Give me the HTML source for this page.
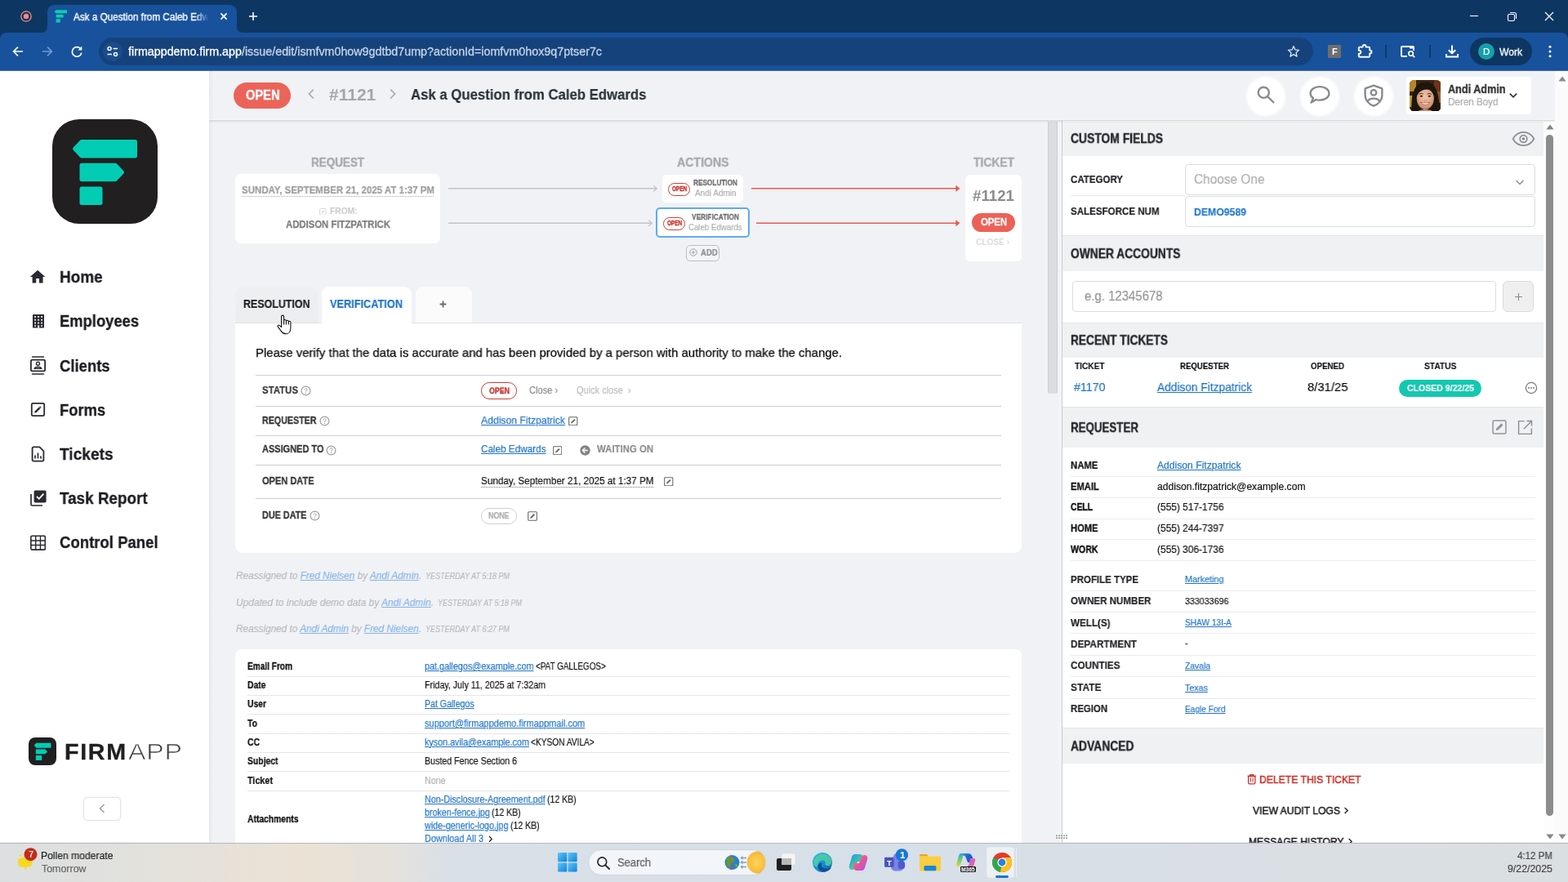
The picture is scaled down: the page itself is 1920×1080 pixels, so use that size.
<!DOCTYPE html>
<html lang="en"><head><meta charset="utf-8"><title>Ask a Question from Caleb Edwards</title>
<style>
html,body{margin:0;padding:0}
body{width:1920px;height:1080px;overflow:hidden;position:relative;background:#f0f2f6;font-family:"Liberation Sans",sans-serif;}
.a{position:absolute;display:block}
.t{position:absolute;display:block;white-space:nowrap;transform-origin:0 50%;will-change:transform;}
.t a, a{color:inherit}
u{text-decoration:underline;text-decoration-thickness:1px;text-underline-offset:1px}

</style></head><body>

<!-- main column -->
<div class="a" style="left:256px;top:87px;width:5px;height:945px;background:linear-gradient(90deg,#e6e7eb,#f0f2f6);"></div>
<span class="t" style="left:381.00px;top:191px;font-size:16px;line-height:16px;color:#a7a8aa;font-weight:700;transform:scale(0.8404,0.9167);transform-origin:0 13px;-webkit-text-stroke:0.40px;">REQUEST</span>
<div class="a" style="left:288px;top:213px;width:251px;height:85px;background:#fff;border-radius:7px;"></div>
<span class="t" style="left:295.50px;top:226px;font-size:13px;line-height:13px;color:#9c9d9f;font-weight:700;transform:scaleX(0.8844);-webkit-text-stroke:0.22px;">SUNDAY, SEPTEMBER 21, 2025 AT 1:37 PM</span>
<div class="a" style="left:296px;top:240px;width:235px;height:1px;border-top:1px dotted #a8a8a8;"></div>
<svg class="a" style="left:391.3px;top:254.8px" width="8.5" height="8.5" viewBox="0 0 12 12"><rect x="0.7" y="0.7" width="10.6" height="10.6" rx="1" fill="none" stroke="#d4d4d4" stroke-width="1.2"/><path d="M3.2 8.8 L3.6 7 L7.6 3 L9 4.4 L5 8.4 Z" fill="#d4d4d4"/></svg>
<span class="t" style="left:403.50px;top:253px;font-size:11px;line-height:11px;color:#cbcbcb;font-weight:700;transform:scaleX(0.9293);-webkit-text-stroke:0.11px;">FROM:</span>
<span class="t" style="left:349.50px;top:268px;font-size:13px;line-height:13px;color:#7b7b7d;font-weight:700;transform:scaleX(0.8717);-webkit-text-stroke:0.25px;">ADDISON FITZPATRICK</span>
<svg class="a" style="left:545px;top:224px" width="265" height="56" viewBox="0 0 265 56">
<path d="M4 6.8 H258.6" stroke="#c2c4c8" stroke-width="1.5"/><path d="M255.3 3.3 L259.2 6.8 L255.3 10.3" fill="none" stroke="#c2c4c8" stroke-width="1.3"/>
<path d="M4 49.2 H252.6" stroke="#c2c4c8" stroke-width="1.5"/><path d="M249.3 45.7 L253.2 49.2 L249.3 52.7" fill="none" stroke="#c2c4c8" stroke-width="1.3"/></svg>
<span class="t" style="left:829.00px;top:191px;font-size:16px;line-height:16px;color:#a7a8aa;font-weight:700;transform:scale(0.8819,0.9167);transform-origin:0 13px;-webkit-text-stroke:0.28px;">ACTIONS</span>
<div class="a" style="left:810.5px;top:214px;width:99.5px;height:33.5px;background:#fff;border-radius:5px;"></div>
<div class="a" style="left:818px;top:224px;width:27px;height:15.6px;background:#fff;border-radius:7.8px;border:1.5px solid #d0403a;box-sizing:border-box;"></div>
<span class="t" style="left:822.50px;top:227px;font-size:8.5px;line-height:8.5px;color:#c9302c;font-weight:700;transform:scaleX(0.7471);-webkit-text-stroke:0.37px;">OPEN</span>
<span class="t" style="left:849.00px;top:219px;font-size:10px;line-height:10px;color:#6d6d6f;font-weight:700;transform:scale(0.8236,0.8750);transform-origin:0 8px;-webkit-text-stroke:0.28px;">RESOLUTION</span>
<span class="t" style="left:851.00px;top:231px;font-size:11px;line-height:11px;color:#adadaf;transform:scaleX(0.9074);-webkit-text-stroke:0.18px;">Andi Admin</span>
<div class="a" style="left:803px;top:254.3px;width:115px;height:36.3px;background:#fff;border-radius:5px;border:2px solid #5eabf2;box-sizing:border-box;"></div>
<div class="a" style="left:812px;top:266px;width:27px;height:15.6px;background:#fff;border-radius:7.8px;border:1.5px solid #d0403a;box-sizing:border-box;"></div>
<span class="t" style="left:816.50px;top:269px;font-size:8.5px;line-height:8.5px;color:#c9302c;font-weight:700;transform:scaleX(0.7471);-webkit-text-stroke:0.37px;">OPEN</span>
<span class="t" style="left:847.00px;top:261px;font-size:10px;line-height:10px;color:#6d6d6f;font-weight:700;transform:scale(0.8306,0.8750);transform-origin:0 8px;-webkit-text-stroke:0.27px;">VERIFICATION</span>
<span class="t" style="left:843.00px;top:273px;font-size:11px;line-height:11px;color:#adadaf;transform:scaleX(0.8781);-webkit-text-stroke:0.18px;">Caleb Edwards</span>
<div class="a" style="left:840px;top:300px;width:41px;height:20px;background:#f3f4f6;border-radius:5px;border:1px solid #bdbdbf;box-sizing:border-box;"></div>
<svg class="a" style="left:843.5px;top:304.2px" width="10" height="10" viewBox="0 0 10 10"><circle cx="5" cy="5" r="4.2" fill="none" stroke="#9a9a9c" stroke-width="0.9"/><path d="M5 2.8 V7.2 M2.8 5 H7.2" stroke="#9a9a9c" stroke-width="0.9"/></svg>
<span class="t" style="left:858.00px;top:304px;font-size:11px;line-height:11px;color:#8f8f91;font-weight:700;transform:scaleX(0.8598);-webkit-text-stroke:0.23px;">ADD</span>
<svg class="a" style="left:916px;top:224px" width="264" height="56" viewBox="0 0 264 56">
<path d="M4 6.8 H258.4" stroke="#ea5a4c" stroke-width="1.6"/><path d="M254.6 3.3 L259 6.8 L254.6 10.3 Z" fill="#ea5a4c" stroke="#ea5a4c" stroke-width="0.6"/>
<path d="M10 49.2 H258.4" stroke="#ea5a4c" stroke-width="1.6"/><path d="M254.6 45.7 L259 49.2 L254.6 52.7 Z" fill="#ea5a4c" stroke="#ea5a4c" stroke-width="0.6"/></svg>
<span class="t" style="left:1192.00px;top:191px;font-size:16px;line-height:16px;color:#a7a8aa;font-weight:700;transform:scale(0.8653,0.9167);transform-origin:0 13px;-webkit-text-stroke:0.32px;">TICKET</span>
<div class="a" style="left:1181.5px;top:213.5px;width:69.5px;height:106.5px;background:#fff;border-radius:6px;"></div>
<span class="t" style="left:1190.50px;top:231px;font-size:18.5px;line-height:18.5px;color:#8b8c8e;font-weight:700;transform:scaleX(1.0112);">#1121</span>
<div class="a" style="left:1190px;top:261px;width:53px;height:23px;background:#ec6157;border-radius:11.5px;"></div>
<span class="t" style="left:1200.50px;top:265px;font-size:13px;line-height:13px;color:#fff;font-weight:700;transform:scaleX(0.8685);-webkit-text-stroke:0.26px;">OPEN</span>
<span class="t" style="left:1194.50px;top:291px;font-size:11px;line-height:11px;color:#dcdcdd;font-weight:700;transform:scaleX(0.9188);-webkit-text-stroke:0.13px;">CLOSE &rsaquo;</span>
<div class="a" style="left:288px;top:352px;width:101px;height:44px;background:linear-gradient(180deg,#eeeff1,#ecedef);border-radius:7px 7px 0 0;"></div>
<div class="a" style="left:394px;top:351px;width:109.5px;height:46px;background:#fff;border-radius:9px 9px 0 0;"></div>
<div class="a" style="left:508.5px;top:351px;width:69.5px;height:44.5px;background:#fbfbfc;border-radius:9px 9px 0 0;"></div>
<span class="t" style="left:298.00px;top:365px;font-size:14px;line-height:14px;color:#202124;font-weight:700;transform:scaleX(0.8880);-webkit-text-stroke:0.23px;">RESOLUTION</span>
<span class="t" style="left:404.00px;top:365px;font-size:14px;line-height:14px;color:#1b74c9;font-weight:700;transform:scaleX(0.9105);-webkit-text-stroke:0.18px;">VERIFICATION</span>
<svg class="a" style="left:538px;top:367.5px" width="9" height="9" viewBox="0 0 9 9"><path d="M4.5 0.6 V8.4 M0.6 4.5 H8.4" stroke="#6a6a6d" stroke-width="1.8"/></svg>
<div class="a" style="left:288px;top:395.5px;width:963px;height:281.5px;background:#fff;border-radius:0 0 9px 9px;"></div>
<div class="a" style="left:288px;top:395px;width:106px;height:1px;background:#e0e1e4;"></div>
<div class="a" style="left:503.5px;top:395px;width:747.5px;height:1px;background:#e0e1e4;"></div>
<span class="t" style="left:313.00px;top:424px;font-size:15px;line-height:15px;color:#0c0c0c;transform:scaleX(0.9943);-webkit-text-stroke:0.25px;">Please verify that the data is accurate and has been provided by a person with authority to make the change.</span>
<div class="a" style="left:313px;top:459px;width:913px;height:1px;background:#cfcfcf;"></div>
<div class="a" style="left:313px;top:497px;width:913px;height:1px;background:#cfcfcf;"></div>
<div class="a" style="left:313px;top:533px;width:913px;height:1px;background:#cfcfcf;"></div>
<div class="a" style="left:313px;top:569px;width:913px;height:1px;background:#cfcfcf;"></div>
<div class="a" style="left:313px;top:610px;width:913px;height:1px;background:#cfcfcf;"></div>
<span class="t" style="left:321.00px;top:471px;font-size:13px;line-height:13px;color:#353537;font-weight:700;transform:scaleX(0.8786);-webkit-text-stroke:0.23px;">STATUS</span>
<svg class="a" style="left:367.5px;top:472.2px" width="13" height="13" viewBox="0 0 13 13"><circle cx="6.5" cy="6.5" r="5.4" fill="none" stroke="#9d9d9f" stroke-width="1.2"/><path d="M4.9 5.3 C4.9 3.3 8.1 3.3 8.1 5.2 C8.1 6.4 6.5 6.5 6.5 7.8" fill="none" stroke="#9d9d9f" stroke-width="1"/><circle cx="6.5" cy="9.5" r="0.7" fill="#9d9d9f"/></svg>
<div class="a" style="left:589px;top:468.4px;width:44px;height:20.4px;background:#fff;border-radius:10.2px;border:1.5px solid #cb3a33;box-sizing:border-box;"></div>
<span class="t" style="left:598.50px;top:473px;font-size:11px;line-height:11px;color:#c9302c;font-weight:700;transform:scale(0.8016,0.9375);transform-origin:0 9px;-webkit-text-stroke:0.35px;">OPEN</span>
<span class="t" style="left:648.00px;top:472px;font-size:12.5px;line-height:12.5px;color:#8a8a8c;transform:scaleX(0.8840);-webkit-text-stroke:0.18px;">Close &rsaquo;</span>
<span class="t" style="left:705.50px;top:472px;font-size:12.5px;line-height:12.5px;color:#bcbcbe;transform:scaleX(0.8783);-webkit-text-stroke:0.18px;">Quick close &nbsp;&rsaquo;</span>
<span class="t" style="left:321.00px;top:508px;font-size:13px;line-height:13px;color:#353537;font-weight:700;transform:scaleX(0.8219);-webkit-text-stroke:0.37px;">REQUESTER</span>
<svg class="a" style="left:390.5px;top:508.70000000000005px" width="13" height="13" viewBox="0 0 13 13"><circle cx="6.5" cy="6.5" r="5.4" fill="none" stroke="#9d9d9f" stroke-width="1.2"/><path d="M4.9 5.3 C4.9 3.3 8.1 3.3 8.1 5.2 C8.1 6.4 6.5 6.5 6.5 7.8" fill="none" stroke="#9d9d9f" stroke-width="1"/><circle cx="6.5" cy="9.5" r="0.7" fill="#9d9d9f"/></svg>
<span class="t" style="left:588.50px;top:508px;font-size:13px;line-height:13px;color:#2074c7;transform:scaleX(0.9378);-webkit-text-stroke:0.18px;"><u>Addison Fitzpatrick</u></span>
<svg class="a" style="left:696px;top:509.6px" width="11.5" height="11.5" viewBox="0 0 12 12"><rect x="0.7" y="0.7" width="10.6" height="10.6" rx="1" fill="none" stroke="#666" stroke-width="1.1"/><path d="M3.2 8.8 L3.6 7 L7.6 3 L9 4.4 L5 8.4 Z" fill="#666"/></svg>
<span class="t" style="left:321.00px;top:543px;font-size:13px;line-height:13px;color:#353537;font-weight:700;transform:scaleX(0.8451);-webkit-text-stroke:0.31px;">ASSIGNED TO</span>
<svg class="a" style="left:399.3px;top:544.5px" width="13" height="13" viewBox="0 0 13 13"><circle cx="6.5" cy="6.5" r="5.4" fill="none" stroke="#9d9d9f" stroke-width="1.2"/><path d="M4.9 5.3 C4.9 3.3 8.1 3.3 8.1 5.2 C8.1 6.4 6.5 6.5 6.5 7.8" fill="none" stroke="#9d9d9f" stroke-width="1"/><circle cx="6.5" cy="9.5" r="0.7" fill="#9d9d9f"/></svg>
<span class="t" style="left:588.50px;top:543px;font-size:13px;line-height:13px;color:#2074c7;transform:scaleX(0.9018);-webkit-text-stroke:0.18px;"><u>Caleb Edwards</u></span>
<svg class="a" style="left:676.5px;top:545.5px" width="11.5" height="11.5" viewBox="0 0 12 12"><rect x="0.7" y="0.7" width="10.6" height="10.6" rx="1" fill="none" stroke="#666" stroke-width="1.1"/><path d="M3.2 8.8 L3.6 7 L7.6 3 L9 4.4 L5 8.4 Z" fill="#666"/></svg>
<svg class="a" style="left:709.7px;top:544.6px" width="13" height="13" viewBox="0 0 13 13"><circle cx="6.5" cy="6.5" r="6.2" fill="#858587"/><path d="M9.8 6.5 H3.6 M6.3 3.6 L3.4 6.5 L6.3 9.4" fill="none" stroke="#fff" stroke-width="1.4"/></svg>
<span class="t" style="left:730.50px;top:544px;font-size:12.5px;line-height:12.5px;color:#8b8b8d;font-weight:700;transform:scaleX(0.9115);-webkit-text-stroke:0.16px;">WAITING ON</span>
<span class="t" style="left:321.00px;top:582px;font-size:13px;line-height:13px;color:#353537;font-weight:700;transform:scaleX(0.8479);-webkit-text-stroke:0.30px;">OPEN DATE</span>
<span class="t" style="left:588.50px;top:582px;font-size:13px;line-height:13px;color:#111;transform:scaleX(0.9014);-webkit-text-stroke:0.18px;">Sunday, September 21, 2025 at 1:37 PM</span>
<div class="a" style="left:589px;top:596px;width:211px;height:1px;border-top:1px dotted #777;"></div>
<svg class="a" style="left:813px;top:583.8px" width="11.5" height="11.5" viewBox="0 0 12 12"><rect x="0.7" y="0.7" width="10.6" height="10.6" rx="1" fill="none" stroke="#666" stroke-width="1.1"/><path d="M3.2 8.8 L3.6 7 L7.6 3 L9 4.4 L5 8.4 Z" fill="#666"/></svg>
<span class="t" style="left:321.00px;top:624px;font-size:13px;line-height:13px;color:#353537;font-weight:700;transform:scaleX(0.8323);-webkit-text-stroke:0.34px;">DUE DATE</span>
<svg class="a" style="left:378.5px;top:625.1px" width="13" height="13" viewBox="0 0 13 13"><circle cx="6.5" cy="6.5" r="5.4" fill="none" stroke="#9d9d9f" stroke-width="1.2"/><path d="M4.9 5.3 C4.9 3.3 8.1 3.3 8.1 5.2 C8.1 6.4 6.5 6.5 6.5 7.8" fill="none" stroke="#9d9d9f" stroke-width="1"/><circle cx="6.5" cy="9.5" r="0.7" fill="#9d9d9f"/></svg>
<div class="a" style="left:589px;top:622.3px;width:44px;height:19.5px;background:#fff;border-radius:9.75px;border:1px solid #d0d0d2;box-sizing:border-box;"></div>
<span class="t" style="left:598.25px;top:627px;font-size:10px;line-height:10px;color:#a9a9ab;font-weight:700;transform:scaleX(0.8822);-webkit-text-stroke:0.17px;">NONE</span>
<svg class="a" style="left:646.2px;top:625.6px" width="12" height="12" viewBox="0 0 12 12"><rect x="0.7" y="0.7" width="10.6" height="10.6" rx="1" fill="none" stroke="#666" stroke-width="1.1"/><path d="M3.2 8.8 L3.6 7 L7.6 3 L9 4.4 L5 8.4 Z" fill="#666"/></svg>
<span class="t" style="left:288.50px;top:699px;font-size:12.5px;line-height:12.5px;color:#b7b9be;font-style:italic;transform:scaleX(0.9423);-webkit-text-stroke:0.18px;">Reassigned to <u style="color:#86b4e6">Fred Nielsen</u> by <u style="color:#86b4e6">Andi Admin</u>.</span>
<span class="t" style="left:521.40px;top:700px;font-size:10.5px;line-height:10.5px;color:#b7b9be;font-style:italic;transform:scaleX(0.8596);-webkit-text-stroke:0.18px;">YESTERDAY AT 5:18 PM</span>
<span class="t" style="left:288.50px;top:732px;font-size:12.5px;line-height:12.5px;color:#b7b9be;font-style:italic;transform:scaleX(0.9549);-webkit-text-stroke:0.18px;">Updated to include demo data by <u style="color:#86b4e6">Andi Admin</u>.</span>
<span class="t" style="left:536.30px;top:733px;font-size:10.5px;line-height:10.5px;color:#b7b9be;font-style:italic;transform:scaleX(0.8596);-webkit-text-stroke:0.18px;">YESTERDAY AT 5:18 PM</span>
<span class="t" style="left:288.50px;top:764px;font-size:12.5px;line-height:12.5px;color:#b7b9be;font-style:italic;transform:scaleX(0.9422);-webkit-text-stroke:0.18px;">Reassigned to <u style="color:#86b4e6">Andi Admin</u> by <u style="color:#86b4e6">Fred Nielsen</u>.</span>
<span class="t" style="left:521.40px;top:765px;font-size:10.5px;line-height:10.5px;color:#b7b9be;font-style:italic;transform:scaleX(0.8596);-webkit-text-stroke:0.18px;">YESTERDAY AT 6:27 PM</span>
<div class="a" style="left:288px;top:795px;width:963px;height:240px;background:#fff;border-radius:8px 8px 0 0;"></div>
<div class="a" style="left:303px;top:828px;width:933px;height:1px;background:#e6e6e8;"></div>
<div class="a" style="left:303px;top:851px;width:933px;height:1px;background:#e6e6e8;"></div>
<div class="a" style="left:303px;top:874px;width:933px;height:1px;background:#e6e6e8;"></div>
<div class="a" style="left:303px;top:898px;width:933px;height:1px;background:#e6e6e8;"></div>
<div class="a" style="left:303px;top:921px;width:933px;height:1px;background:#e6e6e8;"></div>
<div class="a" style="left:303px;top:944px;width:933px;height:1px;background:#e6e6e8;"></div>
<div class="a" style="left:303px;top:968px;width:933px;height:1px;background:#e6e6e8;"></div>
<span class="t" style="left:303.00px;top:810px;font-size:12px;line-height:12px;color:#111;font-weight:700;transform:scaleX(0.8415);-webkit-text-stroke:0.29px;">Email From</span>
<span class="t" style="left:519.50px;top:810px;font-size:12px;line-height:12px;color:#2074c7;transform:scaleX(0.9011);-webkit-text-stroke:0.18px;"><u>pat.gallegos@example.com</u></span>
<span class="t" style="left:655.80px;top:810px;font-size:12px;line-height:12px;color:#111;transform:scaleX(0.8245);-webkit-text-stroke:0.18px;">&lt;PAT GALLEGOS&gt;</span>
<span class="t" style="left:303.00px;top:833px;font-size:12px;line-height:12px;color:#111;font-weight:700;transform:scaleX(0.8649);-webkit-text-stroke:0.24px;">Date</span>
<span class="t" style="left:519.50px;top:833px;font-size:12px;line-height:12px;color:#111;transform:scaleX(0.8899);-webkit-text-stroke:0.18px;">Friday, July 11, 2025 at 7:32am</span>
<span class="t" style="left:303.00px;top:856px;font-size:12px;line-height:12px;color:#111;font-weight:700;transform:scaleX(0.8618);-webkit-text-stroke:0.25px;">User</span>
<span class="t" style="left:519.50px;top:856px;font-size:12px;line-height:12px;color:#2074c7;transform:scaleX(0.8819);-webkit-text-stroke:0.18px;"><u>Pat Gallegos</u></span>
<span class="t" style="left:303.00px;top:880px;font-size:12px;line-height:12px;color:#111;font-weight:700;transform:scaleX(0.8707);-webkit-text-stroke:0.23px;">To</span>
<span class="t" style="left:519.50px;top:880px;font-size:12px;line-height:12px;color:#2074c7;transform:scaleX(0.9186);-webkit-text-stroke:0.18px;"><u>support@firmappdemo.firmappmail.com</u></span>
<span class="t" style="left:303.00px;top:903px;font-size:12px;line-height:12px;color:#111;font-weight:700;transform:scaleX(0.8649);-webkit-text-stroke:0.24px;">CC</span>
<span class="t" style="left:519.50px;top:903px;font-size:12px;line-height:12px;color:#2074c7;transform:scaleX(0.8943);-webkit-text-stroke:0.18px;"><u>kyson.avila@example.com</u></span>
<span class="t" style="left:650.30px;top:903px;font-size:12px;line-height:12px;color:#111;transform:scaleX(0.8472);-webkit-text-stroke:0.18px;">&lt;KYSON AVILA&gt;</span>
<span class="t" style="left:303.00px;top:926px;font-size:12px;line-height:12px;color:#111;font-weight:700;transform:scaleX(0.8652);-webkit-text-stroke:0.24px;">Subject</span>
<span class="t" style="left:519.50px;top:926px;font-size:12px;line-height:12px;color:#111;transform:scaleX(0.8868);-webkit-text-stroke:0.18px;">Busted Fence Section 6</span>
<span class="t" style="left:303.00px;top:950px;font-size:12px;line-height:12px;color:#111;font-weight:700;transform:scaleX(0.8994);-webkit-text-stroke:0.17px;">Ticket</span>
<span class="t" style="left:519.50px;top:950px;font-size:12px;line-height:12px;color:#b0b0b2;transform:scaleX(0.8889);-webkit-text-stroke:0.18px;">None</span>
<span class="t" style="left:303.00px;top:997px;font-size:12px;line-height:12px;color:#111;font-weight:700;transform:scaleX(0.8598);-webkit-text-stroke:0.25px;">Attachments</span>
<span class="t" style="left:519.50px;top:973px;font-size:12px;line-height:12px;color:#2074c7;transform:scaleX(0.8959);-webkit-text-stroke:0.18px;"><u>Non-Disclosure-Agreement.pdf</u></span>
<span class="t" style="left:670.00px;top:973px;font-size:12px;line-height:12px;color:#111;transform:scaleX(0.8750);-webkit-text-stroke:0.18px;">(12 KB)</span>
<span class="t" style="left:519.50px;top:989px;font-size:12px;line-height:12px;color:#2074c7;transform:scaleX(0.8927);-webkit-text-stroke:0.18px;"><u>broken-fence.jpg</u></span>
<span class="t" style="left:602.40px;top:989px;font-size:12px;line-height:12px;color:#111;transform:scaleX(0.8750);-webkit-text-stroke:0.18px;">(12 KB)</span>
<span class="t" style="left:519.50px;top:1005px;font-size:12px;line-height:12px;color:#2074c7;transform:scaleX(0.8976);-webkit-text-stroke:0.18px;"><u>wide-generic-logo.jpg</u></span>
<span class="t" style="left:624.80px;top:1005px;font-size:12px;line-height:12px;color:#111;transform:scaleX(0.8750);-webkit-text-stroke:0.18px;">(12 KB)</span>
<span class="t" style="left:519.50px;top:1021px;font-size:12px;line-height:12px;color:#2074c7;transform:scaleX(0.9069);-webkit-text-stroke:0.18px;">Download All 3</span>
<svg class="a" style="left:597px;top:1023px" width="7" height="8" viewBox="0 0 7 8"><path d="M2 1 L5.2 4.4 L2 7.8" fill="none" stroke="#222" stroke-width="1.3"/></svg>
<div class="a" style="left:1283px;top:149px;width:13px;height:883px;background:#f1f2f5;"></div>
<div class="a" style="left:1283px;top:149px;width:12.2px;height:333px;background:#dcdde1;border-radius:0 0 3px 3px;border-left:1px solid #cdced2;border-right:1px solid #cdced2;box-sizing:border-box;"></div>
<svg class="a" style="left:338.6px;top:385.4px" width="19" height="26" viewBox="0 0 19 26">
<path d="M5.6 14.6 V2.6 a1.5 1.5 0 0 1 3 0 V8 a1.4 1.4 0 0 1 2.8 -0.2 V8.6 a1.4 1.4 0 0 1 2.8 0 V9.6 a1.35 1.35 0 0 1 2.7 0 V16.4 C16.9 20.6 14.6 23.8 11 23.8 C8.2 23.8 6.8 22.8 5.4 20.6 L1.3 15.2 C0.4 13.8 2.2 12.4 3.5 13.6 L5.6 15.6 Z" fill="#fff" stroke="#111" stroke-width="1.1" stroke-linejoin="round"/>
<path d="M8.6 8 V12.4 M11.4 8.6 V12.4 M14.2 9.6 V12.4" stroke="#111" stroke-width="1.1" fill="none"/></svg>
<!-- right panel -->
<div class="a" style="left:1295.2px;top:149px;width:5.3px;height:883px;background:#f3f4f7;"></div>
<div class="a" style="left:1300.5px;top:148px;width:589.5px;height:883px;background:#fff;"></div>
<div class="a" style="left:1299.8px;top:148px;width:1.3px;height:884px;background:#cbccd0;"></div>
<div class="a" style="left:1301.0px;top:148.5px;width:589px;height:42.3px;background:#f0f1f3;"></div>
<span class="t" style="left:1311.00px;top:162px;font-size:15px;line-height:15px;color:#222326;font-weight:700;transform:scale(0.9245,1.0600);transform-origin:0 13px;-webkit-text-stroke:0.30px;">CUSTOM FIELDS</span>
<svg class="a" style="left:1850.5px;top:159.5px" width="29" height="20" viewBox="0 0 29 20"><path d="M1.6 10 C5 3.6 10 1.8 14.5 1.8 C19 1.8 24 3.6 27.4 10 C24 16.4 19 18.2 14.5 18.2 C10 18.2 5 16.4 1.6 10 Z" fill="none" stroke="#8d8e92" stroke-width="1.7"/><circle cx="14.5" cy="10" r="4.3" fill="none" stroke="#8d8e92" stroke-width="1.7"/><circle cx="14.5" cy="10" r="1.8" fill="#8d8e92"/></svg>
<span class="t" style="left:1311.00px;top:213px;font-size:13px;line-height:13px;color:#232427;font-weight:700;transform:scaleX(0.8860);-webkit-text-stroke:0.22px;">CATEGORY</span>
<div class="a" style="left:1451.3px;top:201.3px;width:428.5px;height:37.4px;background:#fff;border-radius:4px;border:1px solid #dcdde0;box-sizing:border-box;"></div>
<span class="t" style="left:1462.00px;top:212px;font-size:16px;line-height:16px;color:#adaeb1;transform:scaleX(0.9628);-webkit-text-stroke:0.18px;">Choose One</span>
<svg class="a" style="left:1855px;top:219px" width="12" height="9" viewBox="0 0 12 9"><path d="M1.6 2 L6 6.4 L10.4 2" fill="none" stroke="#8a8b8e" stroke-width="1.4"/></svg>
<div class="a" style="left:1311px;top:239px;width:140px;height:1px;background:#e9e9eb;"></div>
<span class="t" style="left:1311.00px;top:252px;font-size:13px;line-height:13px;color:#232427;font-weight:700;transform:scaleX(0.8889);-webkit-text-stroke:0.21px;">SALESFORCE NUM</span>
<div class="a" style="left:1451.3px;top:240.4px;width:428.5px;height:37.3px;background:#fff;border-radius:4px;border:1px solid #dcdde0;box-sizing:border-box;"></div>
<span class="t" style="left:1462.00px;top:253px;font-size:13px;line-height:13px;color:#1b74c9;font-weight:700;transform:scaleX(0.9423);-webkit-text-stroke:0.10px;">DEMO9589</span>
<div class="a" style="left:1301.0px;top:288px;width:589px;height:1.6px;background:#e4e5e8;"></div>
<div class="a" style="left:1301.0px;top:289px;width:589px;height:43.3px;background:#f0f1f3;"></div>
<span class="t" style="left:1311.00px;top:303px;font-size:15px;line-height:15px;color:#222326;font-weight:700;transform:scale(0.9205,1.0600);transform-origin:0 13px;-webkit-text-stroke:0.30px;">OWNER ACCOUNTS</span>
<div class="a" style="left:1313.3px;top:344.3px;width:518.5px;height:37.4px;background:#fff;border-radius:4px;border:1px solid #dcdde0;box-sizing:border-box;"></div>
<span class="t" style="left:1328.00px;top:355px;font-size:16px;line-height:16px;color:#929396;transform:scaleX(0.9333);-webkit-text-stroke:0.18px;">e.g. 12345678</span>
<div class="a" style="left:1840.3px;top:344.3px;width:37.4px;height:37.4px;background:#efeff0;border-radius:6px;border:1px solid #d9dadc;box-sizing:border-box;"></div>
<svg class="a" style="left:1853.5px;top:357.5px" width="11" height="11" viewBox="0 0 11 11"><path d="M5.5 1 V10 M1 5.5 H10" stroke="#8a8b8e" stroke-width="1.1"/></svg>
<div class="a" style="left:1301.0px;top:394.5px;width:589px;height:1.6px;background:#e4e5e8;"></div>
<div class="a" style="left:1301.0px;top:395.5px;width:589px;height:42.2px;background:#f0f1f3;"></div>
<span class="t" style="left:1311.00px;top:409px;font-size:15px;line-height:15px;color:#222326;font-weight:700;transform:scale(0.9153,1.0600);transform-origin:0 13px;-webkit-text-stroke:0.30px;">RECENT TICKETS</span>
<span class="t" style="left:1316.00px;top:443px;font-size:11px;line-height:11px;color:#111;font-weight:700;transform:scaleX(0.9186);-webkit-text-stroke:0.13px;">TICKET</span>
<span class="t" style="left:1444.50px;top:443px;font-size:11px;line-height:11px;color:#111;font-weight:700;transform:scaleX(0.8763);-webkit-text-stroke:0.20px;">REQUESTER</span>
<span class="t" style="left:1604.50px;top:443px;font-size:11px;line-height:11px;color:#111;font-weight:700;transform:scaleX(0.8823);-webkit-text-stroke:0.19px;">OPENED</span>
<span class="t" style="left:1744.00px;top:443px;font-size:11px;line-height:11px;color:#111;font-weight:700;transform:scaleX(0.9322);-webkit-text-stroke:0.10px;">STATUS</span>
<span class="t" style="left:1315.00px;top:466px;font-size:15px;line-height:15px;color:#2074c7;transform:scaleX(0.9481);-webkit-text-stroke:0.18px;">#1170</span>
<span class="t" style="left:1416.50px;top:466px;font-size:15px;line-height:15px;color:#2074c7;transform:scaleX(0.9154);-webkit-text-stroke:0.18px;"><u>Addison Fitzpatrick</u></span>
<span class="t" style="left:1600.50px;top:466px;font-size:15px;line-height:15px;color:#111;transform:scaleX(0.9891);-webkit-text-stroke:0.18px;">8/31/25</span>
<div class="a" style="left:1712.7px;top:465px;width:101.3px;height:21px;background:#14c8b0;border-radius:10.5px;"></div>
<span class="t" style="left:1723.00px;top:470px;font-size:11.5px;line-height:11.5px;color:#fff;font-weight:700;transform:scaleX(0.9164);-webkit-text-stroke:0.14px;">CLOSED 9/22/25</span>
<svg class="a" style="left:1867px;top:467px" width="16" height="16" viewBox="0 0 16 16"><circle cx="8" cy="8" r="6.6" fill="none" stroke="#77787b" stroke-width="1.2"/><circle cx="5" cy="8" r="0.95" fill="#77787b"/><circle cx="8" cy="8" r="0.95" fill="#77787b"/><circle cx="11" cy="8" r="0.95" fill="#77787b"/></svg>
<div class="a" style="left:1301.0px;top:498px;width:589px;height:1.6px;background:#e4e5e8;"></div>
<div class="a" style="left:1301.0px;top:499px;width:589px;height:48.7px;background:#f0f1f3;"></div>
<span class="t" style="left:1311.00px;top:516px;font-size:15px;line-height:15px;color:#222326;font-weight:700;transform:scale(0.8890,1.0600);transform-origin:0 13px;-webkit-text-stroke:0.30px;">REQUESTER</span>
<svg class="a" style="left:1826.5px;top:514px" width="18" height="18" viewBox="0 0 12 12"><rect x="0.7" y="0.7" width="10.6" height="10.6" rx="1" fill="none" stroke="#939498" stroke-width="1"/><path d="M3.2 8.8 L3.6 7 L7.6 3 L9 4.4 L5 8.4 Z" fill="#939498"/></svg>
<svg class="a" style="left:1857.5px;top:513.7px" width="19" height="19" viewBox="0 0 19 19"><path d="M8.6 1.6 H1.6 V17.4 H17.4 V10.4" fill="none" stroke="#8d8e92" stroke-width="1.4"/><path d="M11.6 1.5 H17.5 V7.4 M17.3 1.7 L7.8 11.2" fill="none" stroke="#8d8e92" stroke-width="1.4"/></svg>
<span class="t" style="left:1311.00px;top:563px;font-size:13px;line-height:13px;color:#111;font-weight:700;transform:scaleX(0.8751);-webkit-text-stroke:0.24px;">NAME</span>
<span class="t" style="left:1417.00px;top:564px;font-size:12px;line-height:12px;color:#2074c7;transform:scaleX(1.0111);-webkit-text-stroke:0.18px;"><u>Addison Fitzpatrick</u></span>
<div class="a" style="left:1311px;top:583.3px;width:569px;height:1px;background:#ececee;"></div>
<span class="t" style="left:1311.00px;top:589px;font-size:13px;line-height:13px;color:#111;font-weight:700;transform:scaleX(0.8603);-webkit-text-stroke:0.27px;">EMAIL</span>
<span class="t" style="left:1417.00px;top:590px;font-size:12px;line-height:12px;color:#111;transform:scaleX(1.0106);-webkit-text-stroke:0.18px;">addison.fitzpatrick@example.com</span>
<div class="a" style="left:1311px;top:609.3px;width:569px;height:1px;background:#ececee;"></div>
<span class="t" style="left:1311.00px;top:614px;font-size:13px;line-height:13px;color:#111;font-weight:700;transform:scaleX(0.7952);-webkit-text-stroke:0.44px;">CELL</span>
<span class="t" style="left:1417.00px;top:615px;font-size:12px;line-height:12px;color:#111;transform:scaleX(0.9931);-webkit-text-stroke:0.18px;">(555) 517-1756</span>
<div class="a" style="left:1311px;top:635px;width:569px;height:1px;background:#ececee;"></div>
<span class="t" style="left:1311.00px;top:640px;font-size:13px;line-height:13px;color:#111;font-weight:700;transform:scaleX(0.8590);-webkit-text-stroke:0.28px;">HOME</span>
<span class="t" style="left:1417.00px;top:641px;font-size:12px;line-height:12px;color:#111;transform:scaleX(0.9931);-webkit-text-stroke:0.18px;">(555) 244-7397</span>
<div class="a" style="left:1311px;top:660.3px;width:569px;height:1px;background:#ececee;"></div>
<span class="t" style="left:1311.00px;top:666px;font-size:13px;line-height:13px;color:#111;font-weight:700;transform:scaleX(0.8137);-webkit-text-stroke:0.39px;">WORK</span>
<span class="t" style="left:1417.00px;top:667px;font-size:12px;line-height:12px;color:#111;transform:scaleX(0.9931);-webkit-text-stroke:0.18px;">(555) 306-1736</span>
<div class="a" style="left:1311px;top:686px;width:569px;height:1px;background:#ececee;"></div>
<span class="t" style="left:1311.00px;top:703px;font-size:13px;line-height:13px;color:#232427;font-weight:700;transform:scaleX(0.8839);-webkit-text-stroke:0.22px;">PROFILE TYPE</span>
<span class="t" style="left:1451.00px;top:704px;font-size:11px;line-height:11px;color:#2074c7;transform:scaleX(0.9835);-webkit-text-stroke:0.18px;"><u>Marketing</u></span>
<div class="a" style="left:1311px;top:723.3px;width:569px;height:1px;background:#ececee;"></div>
<span class="t" style="left:1311.00px;top:729px;font-size:13px;line-height:13px;color:#232427;font-weight:700;transform:scaleX(0.8914);-webkit-text-stroke:0.21px;">OWNER NUMBER</span>
<span class="t" style="left:1451.00px;top:731px;font-size:11px;line-height:11px;color:#111;transform:scaleX(0.9716);-webkit-text-stroke:0.18px;">333033696</span>
<div class="a" style="left:1311px;top:749.3px;width:569px;height:1px;background:#ececee;"></div>
<span class="t" style="left:1311.00px;top:756px;font-size:13px;line-height:13px;color:#232427;font-weight:700;transform:scaleX(0.8956);-webkit-text-stroke:0.20px;">WELL(S)</span>
<span class="t" style="left:1451.00px;top:757px;font-size:11px;line-height:11px;color:#2074c7;transform:scaleX(0.9201);-webkit-text-stroke:0.18px;"><u>SHAW 13I-A</u></span>
<div class="a" style="left:1311px;top:775.3px;width:569px;height:1px;background:#ececee;"></div>
<span class="t" style="left:1311.00px;top:782px;font-size:13px;line-height:13px;color:#232427;font-weight:700;transform:scaleX(0.9069);-webkit-text-stroke:0.17px;">DEPARTMENT</span>
<span class="t" style="left:1451.00px;top:782px;font-size:11px;line-height:11px;color:#111;transform:scaleX(0.9532);-webkit-text-stroke:0.18px;">-</span>
<div class="a" style="left:1311px;top:802.3px;width:569px;height:1px;background:#ececee;"></div>
<span class="t" style="left:1311.00px;top:808px;font-size:13px;line-height:13px;color:#232427;font-weight:700;transform:scaleX(0.9007);-webkit-text-stroke:0.19px;">COUNTIES</span>
<span class="t" style="left:1451.00px;top:810px;font-size:11px;line-height:11px;color:#2074c7;transform:scaleX(0.9385);-webkit-text-stroke:0.18px;"><u>Zavala</u></span>
<div class="a" style="left:1311px;top:828.3px;width:569px;height:1px;background:#ececee;"></div>
<span class="t" style="left:1311.00px;top:835px;font-size:13px;line-height:13px;color:#232427;font-weight:700;transform:scaleX(0.9217);-webkit-text-stroke:0.14px;">STATE</span>
<span class="t" style="left:1451.00px;top:837px;font-size:11px;line-height:11px;color:#2074c7;transform:scaleX(0.9739);-webkit-text-stroke:0.18px;"><u>Texas</u></span>
<div class="a" style="left:1311px;top:855.3px;width:569px;height:1px;background:#ececee;"></div>
<span class="t" style="left:1311.00px;top:861px;font-size:13px;line-height:13px;color:#232427;font-weight:700;transform:scaleX(0.8772);-webkit-text-stroke:0.24px;">REGION</span>
<span class="t" style="left:1451.00px;top:863px;font-size:11px;line-height:11px;color:#2074c7;transform:scaleX(0.9199);-webkit-text-stroke:0.18px;"><u>Eagle Ford</u></span>
<div class="a" style="left:1301.0px;top:891px;width:589px;height:1.6px;background:#e4e5e8;"></div>
<div class="a" style="left:1301.0px;top:892px;width:589px;height:43px;background:#f0f1f3;"></div>
<span class="t" style="left:1311.00px;top:906px;font-size:15px;line-height:15px;color:#222326;font-weight:700;transform:scale(0.9236,1.0600);transform-origin:0 13px;-webkit-text-stroke:0.30px;">ADVANCED</span>
<svg class="a" style="left:1527px;top:948px" width="11.5" height="12.5" viewBox="0 0 11.5 12.5"><path d="M0.6 2.2 H10.9 M3.8 2 V0.7 H7.7 V2" fill="none" stroke="#c9302c" stroke-width="1.2"/><path d="M1.6 2.6 H9.9 V10.6 a1.2 1.2 0 0 1 -1.2 1.2 H2.8 a1.2 1.2 0 0 1 -1.2 -1.2 Z" fill="none" stroke="#c9302c" stroke-width="1.3"/><path d="M4.4 4.6 V9.6 M7.1 4.6 V9.6" stroke="#c9302c" stroke-width="1.1"/></svg>
<span class="t" style="left:1541.50px;top:948px;font-size:13px;line-height:13px;color:#c9302c;transform:scaleX(0.9349);-webkit-text-stroke:0.55px;">DELETE THIS TICKET</span>
<span class="t" style="left:1534.00px;top:986px;font-size:13px;line-height:13px;color:#1d1e21;transform:scaleX(0.9335);-webkit-text-stroke:0.55px;">VIEW AUDIT LOGS</span>
<svg class="a" style="left:1645px;top:987.5px" width="7" height="9" viewBox="0 0 7 9"><path d="M1.6 1 L5.2 4.5 L1.6 8" fill="none" stroke="#1d1e21" stroke-width="1.3"/></svg>
<span class="t" style="left:1529.00px;top:1024px;font-size:13px;line-height:13px;color:#1d1e21;transform:scaleX(0.9303);-webkit-text-stroke:0.55px;">MESSAGE HISTORY</span>
<svg class="a" style="left:1649.5px;top:1025.5px" width="7" height="9" viewBox="0 0 7 9"><path d="M1.6 1 L5.2 4.5 L1.6 8" fill="none" stroke="#1d1e21" stroke-width="1.3"/></svg>
<div class="a" style="left:1890px;top:148px;width:14px;height:883px;background:#fdfdfd;"></div>
<div class="a" style="left:1893.3px;top:165px;width:8.7px;height:833.5px;background:#8c8c8c;border-radius:4.5px;"></div>
<svg class="a" style="left:1892.7px;top:152px" width="10" height="7" viewBox="0 0 10 7"><path d="M0.4 6.6 L5 0.6 L9.6 6.6 Z" fill="#858585"/></svg>
<svg class="a" style="left:1892.7px;top:1020.5px" width="10" height="7" viewBox="0 0 10 7"><path d="M0.4 0.4 L5 6.4 L9.6 0.4 Z" fill="#858585"/></svg>
<svg class="a" style="left:1293px;top:1022px" width="14" height="6" viewBox="0 0 14 6"><g fill="#9a9a9d"><rect x="0" y="0.5" width="2" height="1.6"/><rect x="3" y="0.5" width="2" height="1.6"/><rect x="6" y="0.5" width="2" height="1.6"/><rect x="9" y="0.5" width="2" height="1.6"/><rect x="12" y="0.5" width="2" height="1.6"/><rect x="0" y="3.4" width="2" height="1.6"/><rect x="3" y="3.4" width="2" height="1.6"/><rect x="6" y="3.4" width="2" height="1.6"/><rect x="9" y="3.4" width="2" height="1.6"/><rect x="12" y="3.4" width="2" height="1.6"/></g></svg>
<!-- app header -->
<div class="a" style="left:256px;top:87px;width:1648px;height:60px;background:linear-gradient(90deg,#e8e9ed 0px,#f1f2f6 5px);box-shadow:0 1px 3px rgba(0,0,0,0.17);border-bottom:1.5px solid #f6f6f7;box-sizing:border-box;"></div>
<div class="a" style="left:0px;top:87px;width:256px;height:62px;background:#fff;"></div>
<div class="a" style="left:286px;top:101px;width:70px;height:31.5px;background:#ec6459;border-radius:16px;"></div>
<span class="t" style="left:300.50px;top:108px;font-size:17px;line-height:17px;color:#fff;font-weight:700;transform:scaleX(0.8612);-webkit-text-stroke:0.36px;">OPEN</span>
<svg class="a" style="left:376px;top:108px" width="10" height="14" viewBox="0 0 10 14"><path d="M7.8 1.6 L2.4 7 L7.8 12.4" fill="none" stroke="#a9abb0" stroke-width="1.7"/></svg>
<span class="t" style="left:402.50px;top:105px;font-size:21px;line-height:21px;color:#a5a6a9;font-weight:700;transform:scaleX(0.9956);">#1121</span>
<svg class="a" style="left:476px;top:108px" width="10" height="14" viewBox="0 0 10 14"><path d="M2.2 1.6 L7.6 7 L2.2 12.4" fill="none" stroke="#a9abb0" stroke-width="1.7"/></svg>
<span class="t" style="left:502.50px;top:107px;font-size:18px;line-height:18px;color:#263238;font-weight:700;transform:scaleX(0.9304);-webkit-text-stroke:0.18px;">Ask a Question from Caleb Edwards</span>
<div class="a" style="left:1523.8px;top:91.8px;width:52px;height:52px;background:radial-gradient(circle closest-side,#fff 0%,#fff 84%,rgba(255,255,255,0) 100%);border-radius:26px;"></div>
<div class="a" style="left:1589.8px;top:91.8px;width:52px;height:52px;background:radial-gradient(circle closest-side,#fff 0%,#fff 84%,rgba(255,255,255,0) 100%);border-radius:26px;"></div>
<div class="a" style="left:1656px;top:91.8px;width:52px;height:52px;background:radial-gradient(circle closest-side,#fff 0%,#fff 84%,rgba(255,255,255,0) 100%);border-radius:26px;"></div>
<svg class="a" style="left:1537px;top:103px" width="26" height="26" viewBox="0 0 26 26"><circle cx="10.3" cy="10.3" r="6.6" fill="none" stroke="#8b8d91" stroke-width="2.4"/><path d="M15.2 15.2 L23 23" stroke="#8b8d91" stroke-width="2.4"/></svg>
<svg class="a" style="left:1602px;top:103px" width="28" height="26" viewBox="0 0 28 26"><path d="M14 3.2 C20.6 3.2 25.4 6.7 25.4 11.4 C25.4 16.1 20.6 19.6 14 19.6 C12.4 19.6 10.9 19.4 9.5 19 L3.6 22.6 L6 17 C3.8 15.6 2.6 13.6 2.6 11.4 C2.6 6.7 7.4 3.2 14 3.2 Z" fill="none" stroke="#87898d" stroke-width="2.3" stroke-linejoin="round"/></svg>
<svg class="a" style="left:1669px;top:101.7px" width="26" height="30" viewBox="0 0 26 30"><path d="M13 2.6 L23.4 6.4 V14 C23.4 20.6 19 25.6 13 27.6 C7 25.6 2.6 20.6 2.6 14 V6.4 Z" fill="none" stroke="#87898d" stroke-width="2.3" stroke-linejoin="round"/><circle cx="13" cy="11.4" r="3.3" fill="none" stroke="#87898d" stroke-width="2.3"/><path d="M5.6 22.4 C7.6 17.4 18.4 17.4 20.4 22.4" fill="none" stroke="#87898d" stroke-width="2.3"/></svg>
<div class="a" style="left:1722px;top:94px;width:153px;height:46px;background:#fff;border-radius:4px;"></div>
<svg class="a" style="left:1725.8px;top:97.8px" width="38.4" height="38.4" viewBox="0 0 38.4 38.4">
<defs><clipPath id="av"><rect x="0" y="0" width="38.4" height="38.4" rx="5.5"/></clipPath>
<radialGradient id="sk" cx="0.5" cy="0.42" r="0.62"><stop offset="0" stop-color="#f0c4a8"/><stop offset="0.6" stop-color="#dfa888"/><stop offset="1" stop-color="#b87a5c"/></radialGradient>
<filter id="bl" x="-10%" y="-10%" width="120%" height="120%"><feGaussianBlur stdDeviation="0.55"/></filter></defs>
<g clip-path="url(#av)"><rect width="38.4" height="38.4" fill="#3b2415"/>
<g filter="url(#bl)"><rect x="-1" y="-1" width="9" height="15" fill="#b9832c"/><rect x="-1" y="19" width="4.5" height="14" fill="#c89a3a"/><rect x="30" y="-1" width="9" height="16" fill="#6e3418"/><rect x="33" y="14" width="6" height="14" fill="#8c5a26"/>
<path d="M2.5 39 C1.5 22 4 2.5 19.5 2.5 C34 2.5 36.5 20 36.5 39 Z" fill="#1b1311"/>
<ellipse cx="19.3" cy="22.4" rx="10.6" ry="13.6" fill="url(#sk)"/>
<path d="M8.2 21 C7.8 10.5 13 6 19 7 C26 5.6 31 11 30.4 21 C28.6 14.5 25 11.2 20.6 11.4 C15 11.6 10.6 14.6 8.2 21 Z" fill="#1b1311"/>
<path d="M11.6 17.4 C13 16.4 15.4 16.4 16.8 17.2 M21.6 17.2 C23 16.4 25.4 16.4 26.8 17.4" stroke="#3a241c" stroke-width="0.9" fill="none"/>
<ellipse cx="14.4" cy="19.8" rx="1.7" ry="1" fill="#2b1a15"/><ellipse cx="24.2" cy="19.8" rx="1.7" ry="1" fill="#2b1a15"/>
<path d="M17.6 24.6 C18.6 25.4 20 25.4 21 24.6" stroke="#b27a60" stroke-width="0.8" fill="none"/>
<path d="M13.6 27.2 C16 31.4 22.6 31.4 25 27.2 C21.4 28.2 17.2 28.2 13.6 27.2 Z" fill="#fdf6f0" stroke="#b5574c" stroke-width="0.9"/>
<path d="M10 39 C11 35 27.5 35 28.5 39 Z" fill="#c98f70"/></g></g></svg>
<span class="t" style="left:1773.00px;top:101px;font-size:15px;line-height:15px;color:#333;font-weight:700;transform:scaleX(0.8432);-webkit-text-stroke:0.36px;">Andi Admin</span>
<span class="t" style="left:1773.00px;top:119px;font-size:12.5px;line-height:12.5px;color:#aaabad;transform:scaleX(0.9316);-webkit-text-stroke:0.18px;">Deren Boyd</span>
<svg class="a" style="left:1847px;top:112.2px" width="12" height="10" viewBox="0 0 12 10"><path d="M1.8 2.6 L6 6.8 L10.2 2.6" fill="none" stroke="#333" stroke-width="1.6"/></svg>
<div class="a" style="left:1904px;top:87px;width:16px;height:944px;background:#fbfbfb;"></div>
<svg class="a" style="left:1907.5px;top:92.5px" width="10" height="7" viewBox="0 0 10 7"><path d="M0.4 6.6 L5 0.6 L9.6 6.6 Z" fill="#8a8a8a"/></svg>
<svg class="a" style="left:1907.5px;top:1020.5px" width="10" height="7" viewBox="0 0 10 7"><path d="M0.4 0.4 L5 6.4 L9.6 0.4 Z" fill="#8a8a8a"/></svg>
<!-- sidebar -->
<div class="a" style="left:0px;top:87px;width:256px;height:944px;background:#ffffff;"></div>
<div class="a" style="left:64px;top:145.5px;width:128.5px;height:128.5px;background:#221f20;border-radius:33px;"></div>
<svg class="a" style="left:64px;top:145px" width="129" height="129" viewBox="0 0 129 129">
<path d="M36 26 H101.5 a2.5 2.5 0 0 1 2.5 2.5 V46 a2.5 2.5 0 0 1 -2.5 2.5 H36 a3 3 0 0 1 -2.1 -0.9 L25.6 38.6 a2 2 0 0 1 0 -2.8 L33.9 26.9 a3 3 0 0 1 2.1 -0.9 Z" fill="#02cdb4"/>
<path d="M36 54.7 H77 a3 3 0 0 1 2.1 0.9 L87.4 64.6 a2 2 0 0 1 0 2.8 L79.1 76.3 a3 3 0 0 1 -2.1 0.9 H36 a2.5 2.5 0 0 1 -2.5 -2.5 V57.2 a2.5 2.5 0 0 1 2.5 -2.5 Z" fill="#02cdb4"/>
<rect x="33.5" y="83.5" width="28" height="22.5" rx="2.5" fill="#02cdb4"/></svg>
<svg class="a" style="left:35.2px;top:328.2px" width="22.2" height="22.2" viewBox="0 0 24 24"><path d="M10 20v-6h4v6h5v-8h3L12 3 2 12h3v8z" fill="#2a2a33"/></svg>
<span class="t" style="left:73.00px;top:329px;font-size:20px;line-height:20px;color:#1b1b20;font-weight:700;transform:scaleX(0.9464);-webkit-text-stroke:0.30px;">Home</span>
<svg class="a" style="left:39.6px;top:385.2px" width="14.2" height="16.6" viewBox="0 0 14.2 16.6"><rect x="0" y="0" width="14.2" height="16.6" rx="0.5" fill="#2a2a33"/>
<g fill="#fff"><rect x="2.2" y="2" width="1.8" height="1.8"/><rect x="6.2" y="2" width="1.8" height="1.8"/><rect x="10.2" y="2" width="1.8" height="1.8"/>
<rect x="2.2" y="5.8" width="1.8" height="1.8"/><rect x="6.2" y="5.8" width="1.8" height="1.8"/><rect x="10.2" y="5.8" width="1.8" height="1.8"/>
<rect x="2.2" y="9.6" width="1.8" height="1.8"/><rect x="6.2" y="9.6" width="1.8" height="1.8"/><rect x="10.2" y="9.6" width="1.8" height="1.8"/>
<rect x="2.2" y="13.3" width="1.8" height="1.5"/><rect x="6.2" y="13.4" width="1.9" height="3.2"/><rect x="10.2" y="13.3" width="1.8" height="1.5"/></g></svg>
<span class="t" style="left:73.00px;top:383px;font-size:20px;line-height:20px;color:#1b1b20;font-weight:700;transform:scaleX(0.9194);-webkit-text-stroke:0.30px;">Employees</span>
<svg class="a" style="left:36px;top:435px" width="21" height="25" viewBox="0 0 21 25"><path d="M3 2 H18 M3 23 H18" stroke="#2a2a33" stroke-width="1.7"/><rect x="1.9" y="5.6" width="17.2" height="13.8" rx="1.6" fill="none" stroke="#2a2a33" stroke-width="1.8"/><circle cx="10.5" cy="10.3" r="2" fill="none" stroke="#2a2a33" stroke-width="1.4"/><path d="M6.2 16.3 C6.8 13.6 14.2 13.6 14.8 16.3 Z" fill="none" stroke="#2a2a33" stroke-width="1.4"/></svg>
<span class="t" style="left:73.00px;top:438px;font-size:20px;line-height:20px;color:#1b1b20;font-weight:700;transform:scaleX(0.9237);-webkit-text-stroke:0.30px;">Clients</span>
<svg class="a" style="left:37px;top:491.8px" width="19" height="19" viewBox="0 0 19 19"><rect x="1.8" y="1.8" width="15.4" height="15.4" rx="1.6" fill="none" stroke="#2a2a33" stroke-width="1.8"/><path d="M5.2 13.8 L5.7 11.6 L12 5.3 L13.7 7 L7.4 13.3 Z" fill="#2a2a33"/><path d="M11 6.3 L12.7 8" stroke="#fff" stroke-width="0.7"/></svg>
<span class="t" style="left:73.00px;top:492px;font-size:20px;line-height:20px;color:#1b1b20;font-weight:700;transform:scaleX(0.9178);-webkit-text-stroke:0.30px;">Forms</span>
<svg class="a" style="left:38px;top:545.5px" width="17" height="20" viewBox="0 0 17 20"><path d="M1.6 3 a1.6 1.6 0 0 1 1.6 -1.6 H10.5 L15.4 6.3 V17 a1.6 1.6 0 0 1 -1.6 1.6 H3.2 a1.6 1.6 0 0 1 -1.6 -1.6 Z" fill="none" stroke="#2a2a33" stroke-width="1.8" stroke-linejoin="round"/><path d="M5 15.6 V11.5 M8.5 15.6 V8.5 M12 15.6 V12.5" stroke="#2a2a33" stroke-width="1.7"/></svg>
<span class="t" style="left:73.00px;top:546px;font-size:20px;line-height:20px;color:#1b1b20;font-weight:700;transform:scaleX(0.9566);-webkit-text-stroke:0.30px;">Tickets</span>
<svg class="a" style="left:36.5px;top:600px" width="20" height="20" viewBox="0 0 20 20"><path d="M1 5 V17.5 a1.5 1.5 0 0 0 1.5 1.5 H15" fill="none" stroke="#2a2a33" stroke-width="1.7"/><rect x="4.6" y="0.4" width="15" height="15" rx="1.6" fill="#2a2a33"/><path d="M8 8 L10.8 10.8 L16.4 4.6" fill="none" stroke="#fff" stroke-width="1.8"/></svg>
<span class="t" style="left:73.00px;top:600px;font-size:20px;line-height:20px;color:#1b1b20;font-weight:700;transform:scaleX(0.9430);-webkit-text-stroke:0.30px;">Task Report</span>
<svg class="a" style="left:36.8px;top:654.8px" width="19.2" height="19.4" viewBox="0 0 20 19.4"><rect x="0.9" y="0.9" width="18.2" height="17.6" rx="1.4" fill="none" stroke="#2a2a33" stroke-width="1.7"/><path d="M7 1 V18.4 M13 1 V18.4 M1 6.8 H19 M1 12.6 H19" stroke="#2a2a33" stroke-width="1.5"/></svg>
<span class="t" style="left:73.00px;top:654px;font-size:20px;line-height:20px;color:#1b1b20;font-weight:700;transform:scaleX(0.9276);-webkit-text-stroke:0.30px;">Control Panel</span>
<div class="a" style="left:35px;top:903px;width:33.5px;height:34px;background:#221f20;border-radius:8px;"></div>
<svg class="a" style="left:35px;top:903px" width="34" height="34" viewBox="0 0 129 129">
<path d="M36 26 H104 V48.5 H36 L25 37.2 Z" fill="#02cdb4"/><path d="M33.5 54.7 H77 L88 66 L77 77.2 H33.5 Z" fill="#02cdb4"/><rect x="33.5" y="83.5" width="28" height="22.5" fill="#02cdb4"/></svg>
<span class="t" style="left:78.60px;top:907px;font-size:27.5px;line-height:27.5px;color:#221f20;font-weight:700;transform:scale(1.0433,1.0316);transform-origin:0 23px;-webkit-text-stroke:0.30px;letter-spacing:1.6px;">FIRM</span>
<span class="t" style="left:157.30px;top:907px;font-size:27.5px;line-height:27.5px;color:#3a3a3a;transform:scale(1.1720,1.0316);transform-origin:0 23px;letter-spacing:0.6px;-webkit-text-stroke:0.7px #fff;">APP</span>
<div class="a" style="left:102px;top:976px;width:45.5px;height:29px;background:#fff;border-radius:5px;border:1px solid #e3e3e6;box-sizing:border-box;box-shadow:0 0 3px rgba(0,0,0,0.06);"></div>
<svg class="a" style="left:119px;top:983px" width="12" height="14" viewBox="0 0 12 14"><path d="M8.5 2 L3.5 7 L8.5 12" fill="none" stroke="#9a9ca6" stroke-width="1.5"/></svg>
<!-- browser chrome -->
<div class="a" style="left:0px;top:0px;width:1920px;height:50px;background:#0e3663;"></div>
<div class="a" style="left:0px;top:40px;width:1920px;height:47px;background:#18529c;border-radius:8px 8px 0 0;"></div>
<div class="a" style="left:0px;top:86px;width:1920px;height:1px;background:#4a6f9e;"></div>
<svg class="a" style="left:50px;top:6px" width="250" height="34" viewBox="0 0 250 34">
<path d="M0 34 C6 34 8 31 8 26 L8 9 C8 3.5 11.5 0 17 0 L231 0 C236.5 0 240 3.5 240 9 L240 26 C240 31 242 34 248 34 Z" fill="#18529c"/></svg>
<svg class="a" style="left:22px;top:10px" width="20" height="20" viewBox="0 0 20 20">
<circle cx="10" cy="10" r="6.2" fill="none" stroke="#f08a7c" stroke-width="1.3"/><circle cx="10" cy="10" r="3.2" fill="#f58c7c"/></svg>
<svg class="a" style="left:66px;top:11px" width="18" height="18" viewBox="0 0 18 18">
<path d="M2.5 1.2 H16 V5.2 H2.5 L0.6 3.2 Z" fill="#08cdb4"/><path d="M2.6 6.8 H10.6 L12.4 8.7 L10.6 10.6 H2.6 Z" fill="#08cdb4"/><rect x="2.6" y="12.2" width="5.2" height="4.4" fill="#08cdb4"/></svg>
<span class="t" style="left:90.00px;top:15px;font-size:12.3px;line-height:12.3px;color:#ffffff;transform:scaleX(0.9524);-webkit-text-stroke:0.35px;">Ask a Question from Caleb Edw</span>
<div class="a" style="left:240px;top:8px;width:22px;height:26px;background:linear-gradient(90deg,rgba(24,82,156,0),#18529c 70%);"></div>
<svg class="a" style="left:266px;top:12px" width="16" height="16" viewBox="0 0 16 16"><path d="M4.4 4.4 L11.6 11.6 M11.6 4.4 L4.4 11.6" stroke="#fff" stroke-width="1.7" fill="none"/></svg>
<svg class="a" style="left:302px;top:12px" width="16" height="16" viewBox="0 0 16 16"><path d="M8 3 V13 M3 8 H13" stroke="#fff" stroke-width="1.6" fill="none"/></svg>
<svg class="a" style="left:1795px;top:10px" width="115" height="20" viewBox="0 0 115 20">
<path d="M5 9.5 H15" stroke="#fff" stroke-width="1.1"/>
<rect x="51.5" y="7.5" width="8" height="8" rx="1.5" fill="none" stroke="#fff" stroke-width="1.1"/><path d="M54 5.5 H59.5 a2 2 0 0 1 2 2 V13" fill="none" stroke="#fff" stroke-width="1.1"/>
<path d="M97 5 L107 15 M107 5 L97 15" stroke="#fff" stroke-width="1.2"/></svg>
<svg class="a" style="left:12px;top:53px" width="100" height="20" viewBox="0 0 100 20">
<path d="M16 10 H5 M10 4.6 L4.6 10 L10 15.4" stroke="#fff" stroke-width="1.7" fill="none"/>
<path d="M40 10 H51 M46 4.6 L51.4 10 L46 15.4" stroke="#6f9bd3" stroke-width="1.7" fill="none"/>
<path d="M87.2 7.6 A5.8 5.8 0 1 0 87.8 11.6" stroke="#fff" stroke-width="1.7" fill="none"/><path d="M88.3 3.6 V8.4 H83.5 Z" fill="#fff"/></svg>
<div class="a" style="left:121px;top:46px;width:1487px;height:34px;background:#16427b;border-radius:17px;"></div>
<div class="a" style="left:125.5px;top:51px;width:24px;height:24px;background:#1a4c8e;border-radius:12px;"></div>
<svg class="a" style="left:129px;top:55px" width="18" height="16" viewBox="0 0 18 16">
<circle cx="5" cy="4.5" r="2" fill="none" stroke="#fff" stroke-width="1.5"/><path d="M9.5 4.5 H15" stroke="#fff" stroke-width="1.5"/>
<circle cx="12.5" cy="11.5" r="2" fill="none" stroke="#fff" stroke-width="1.5"/><path d="M2.5 11.5 H8" stroke="#fff" stroke-width="1.5"/></svg>
<span class="t" style="left:157.00px;top:56px;font-size:14px;line-height:14px;color:#ffffff;transform:scaleX(1.0203);-webkit-text-stroke:0.30px;">firmappdemo.firm.app<span style="color:#c3d3e8">/issue/edit/ismfvm0how9gdtbd7ump?actionId=iomfvm0hox9q7ptser7c</span></span>
<svg class="a" style="left:1576px;top:55px" width="16" height="16" viewBox="0 0 18 18"><path d="M9 1.8 L11.1 6.7 L16.4 7.2 L12.4 10.7 L13.6 15.9 L9 13.1 L4.4 15.9 L5.6 10.7 L1.6 7.2 L6.9 6.7 Z" fill="none" stroke="#dfe8f5" stroke-width="1.4" stroke-linejoin="round"/></svg>
<div class="a" style="left:1626px;top:55px;width:16px;height:16px;background:#6e6e6e;"></div>
<span class="t" style="left:1630.50px;top:58px;font-size:11px;line-height:11px;color:#ffffff;font-weight:700;">F</span>
<svg class="a" style="left:1660px;top:52px" width="22" height="22" viewBox="0 0 22 22"><path d="M5 5.6 H8.6 V5 a2 2 0 0 1 4 0 V5.6 H16 a1.2 1.2 0 0 1 1.2 1.2 V9.6 H17.6 a1.9 1.9 0 0 1 0 3.8 H17.2 V16.6 a1.2 1.2 0 0 1 -1.2 1.2 H5 a1.2 1.2 0 0 1 -1.2 -1.2 V13.6 H4.4 a1.9 1.9 0 0 0 0 -3.8 H3.8 V6.8 a1.2 1.2 0 0 1 1.2 -1.2 Z" fill="none" stroke="#fff" stroke-width="1.9" stroke-linejoin="round"/></svg>
<div class="a" style="left:1696.3px;top:55px;width:1.6px;height:16px;background:#103a6c;"></div>
<svg class="a" style="left:1713px;top:54px" width="22" height="18" viewBox="0 0 22 18"><path d="M10 15 H4 a1 1 0 0 1 -1 -1 V4 a1 1 0 0 1 1 -1 H17 a1 1 0 0 1 1 1 V8" fill="none" stroke="#fff" stroke-width="1.9"/><path d="M13 3 H18 V5.5 H13 Z" fill="#fff"/><circle cx="14.6" cy="11.6" r="2.7" fill="none" stroke="#fff" stroke-width="1.7"/><path d="M16.6 13.6 L19.2 16.2" stroke="#fff" stroke-width="1.8"/></svg>
<div class="a" style="left:1750.3px;top:55px;width:1.6px;height:16px;background:#103a6c;"></div>
<svg class="a" style="left:1768px;top:53px" width="20" height="20" viewBox="0 0 20 20"><path d="M10 2.6 V12 M5.8 8.2 L10 12.4 L14.2 8.2" fill="none" stroke="#fff" stroke-width="2"/><path d="M3 13 V16.4 H17 V13" fill="none" stroke="#fff" stroke-width="2"/></svg>
<div class="a" style="left:1800px;top:46px;width:76px;height:34px;background:#0e3663;border-radius:17px;"></div>
<div class="a" style="left:1809.5px;top:53px;width:20px;height:20px;background:#16a0aa;border-radius:10px;"></div>
<span class="t" style="left:1815.60px;top:58px;font-size:11.5px;line-height:11.5px;color:#ffffff;-webkit-text-stroke:0.18px;">D</span>
<span class="t" style="left:1836.00px;top:57px;font-size:13.5px;line-height:13.5px;color:#ffffff;transform:scaleX(0.8956);-webkit-text-stroke:0.35px;">Work</span>
<svg class="a" style="left:1894px;top:53px" width="8" height="20" viewBox="0 0 8 20"><circle cx="4" cy="4.2" r="1.5" fill="#fff"/><circle cx="4" cy="10" r="1.5" fill="#fff"/><circle cx="4" cy="15.8" r="1.5" fill="#fff"/></svg>
<!-- windows taskbar -->
<div class="a" style="left:0px;top:1032px;width:1920px;height:48px;background:linear-gradient(90deg,#dcdfe0 0px,#e1e1dd 150px,#ebe2d4 370px,#e6e2da 460px,#d9e0e7 560px,#d7dfe8 1150px,#d9dfe4 1500px,#dadfe1 1920px);"></div>
<div class="a" style="left:0px;top:1032px;width:1920px;height:1px;background:#b4b9c0;"></div>
<svg class="a" style="left:20px;top:1038px" width="28" height="30" viewBox="0 0 28 30">
<circle cx="5" cy="9.4" r="1.3" fill="#f6d94a"/><circle cx="3.4" cy="13.6" r="1" fill="#f6d94a"/>
<path d="M2.4 19.4 C1 15.6 3.6 12 7.4 13 C9 9.5 14 9.5 15.6 13 C19.8 12 22 16.6 19 19.6 C19.6 23 15.6 24.6 13 23 L11.4 28.4 L9.8 23.2 C6.4 24.8 2.4 23 2.4 19.4 Z" fill="#f8d820"/>
<circle cx="17.5" cy="8.2" r="8" fill="#c42b1c"/></svg>
<span class="t" style="left:35.20px;top:1041px;font-size:11px;line-height:11px;color:#fff;-webkit-text-stroke:0.18px;">7</span>
<span class="t" style="left:50.00px;top:1042px;font-size:12.3px;line-height:12.3px;color:#1f1f1f;transform:scaleX(0.9881);-webkit-text-stroke:0.18px;">Pollen moderate</span>
<span class="t" style="left:51.00px;top:1058px;font-size:12.3px;line-height:12.3px;color:#666;transform:scaleX(1.0096);-webkit-text-stroke:0.18px;">Tomorrow</span>
<svg class="a" style="left:683px;top:1044px" width="24" height="24" viewBox="0 0 24 24">
<defs><linearGradient id="wg" x1="0" y1="0" x2="1" y2="1"><stop offset="0" stop-color="#5ccbf7"/><stop offset="1" stop-color="#0f7fd8"/></linearGradient></defs>
<rect x="0" y="0" width="11.2" height="11.2" rx="1" fill="url(#wg)"/><rect x="12.4" y="0" width="11.2" height="11.2" rx="1" fill="url(#wg)"/><rect x="0" y="12.4" width="11.2" height="11.2" rx="1" fill="url(#wg)"/><rect x="12.4" y="12.4" width="11.2" height="11.2" rx="1" fill="url(#wg)"/></svg>
<div class="a" style="left:720px;top:1040px;width:218px;height:32px;background:#f2f5f9;border-radius:16px;border:1px solid #cfd4db;box-sizing:border-box;"></div>
<svg class="a" style="left:729px;top:1047px" width="20" height="20" viewBox="0 0 20 20"><circle cx="8.3" cy="8.3" r="5.4" fill="none" stroke="#222" stroke-width="1.6"/><path d="M12.3 12.3 L17 17" stroke="#222" stroke-width="1.8" stroke-linecap="round"/></svg>
<span class="t" style="left:756.00px;top:1049px;font-size:14px;line-height:14px;color:#5a5a5a;transform:scaleX(0.9243);-webkit-text-stroke:0.18px;">Search</span>
<svg class="a" style="left:886px;top:1040px" width="52" height="32" viewBox="0 0 52 32">
<defs><clipPath id="sc"><rect x="-170" y="0.5" width="221.3" height="31" rx="15.5"/></clipPath>
<radialGradient id="sg" cx="0.45" cy="0.5" r="0.6"><stop offset="0" stop-color="#fbd45a"/><stop offset="0.7" stop-color="#f7bd3c"/><stop offset="1" stop-color="#ee9f2a"/></radialGradient></defs>
<g clip-path="url(#sc)"><circle cx="42" cy="16" r="13.4" fill="url(#sg)"/>
<circle cx="10.5" cy="16" r="9" fill="#2f7fc9"/><path d="M4.5 11 C7.5 7.5 11.5 9 12.5 12 C14.5 14 11.5 17 9.5 16 C7.5 18 8.5 22.5 6.5 22.5 C3.5 20.5 2.5 15 4.5 11 Z" fill="#5aa02c"/><path d="M14 18 C16 17 18 19 16.5 21.5 C15 22.5 13.5 20.5 14 18 Z" fill="#6ab02c"/>
<path d="M9 6.6 V25.4" stroke="#e0503a" stroke-width="1"/>
<path d="M22 10.5 H28 M22 16 H28 M22 21.5 H28" stroke="#7f9fc6" stroke-width="1.5"/><path d="M23.5 8.6 L21.3 10.5 L23.5 12.4 M23.5 14.1 L21.3 16 L23.5 17.9 M23.5 19.6 L21.3 21.5 L23.5 23.4" fill="none" stroke="#7f9fc6" stroke-width="1.2"/></g></svg>
<svg class="a" style="left:950px;top:1044px" width="26" height="24" viewBox="0 0 26 24"><rect x="7" y="1" width="17" height="14" rx="2" fill="#f4f4f4" stroke="#dcdcdc" stroke-width="0.6"/><rect x="1" y="7" width="18" height="15" rx="2" fill="#1f1f1f"/><rect x="7" y="7" width="12" height="8" fill="#b8b8b8"/></svg>
<svg class="a" style="left:994px;top:1043px" width="26" height="26" viewBox="0 0 26 26">
<defs><linearGradient id="eg" x1="0" y1="0" x2="1" y2="1"><stop offset="0" stop-color="#35c1f1"/><stop offset="0.5" stop-color="#1b8fd9"/><stop offset="1" stop-color="#0c59a4"/></linearGradient></defs>
<circle cx="13" cy="13" r="12" fill="url(#eg)"/><path d="M2 15 C2 7 8 2.5 14 2.5 C20 2.5 24.5 7 24.5 12 C24.5 15 22.5 17 19.5 17 C17 17 16 15.8 16.5 14.5 C17 13 16 10.5 13 10.5 C9 10.5 6.5 14 7.5 18.5 C4 18 2 16.5 2 15 Z" fill="#4fd0a0" opacity="0.85"/><path d="M7.5 18.5 C8.5 23 13 25.5 18 24 C21 23 23 21 24 19 C21 21 16 21.5 13 19 C11 17.5 11.5 14.5 13 13.5 C10 13.5 7 15 7.5 18.5 Z" fill="#0b4f95"/></svg>
<svg class="a" style="left:1038px;top:1043px" width="26" height="26" viewBox="0 0 26 26">
<defs><linearGradient id="cg1" x1="0" y1="0" x2="1" y2="1"><stop offset="0" stop-color="#2a8df0"/><stop offset="0.5" stop-color="#35c6b0"/><stop offset="1" stop-color="#f6c43c"/></linearGradient><linearGradient id="cg2" x1="0" y1="0" x2="1" y2="1"><stop offset="0" stop-color="#f2a23a"/><stop offset="0.5" stop-color="#e8559c"/><stop offset="1" stop-color="#9a5be8"/></linearGradient></defs>
<path d="M9 3 H15 C17 3 18 4 18.5 6 L20 12 H12 L10 18 C9.5 20 8 22 5.5 22 C2.5 22 1 19.5 2 16.5 L5 6.5 C5.6 4.2 7 3 9 3 Z" fill="url(#cg1)"/>
<path d="M17 23 H11 C9 23 8 22 7.5 20 L6 14 H14 L16 8 C16.5 6 18 4 20.5 4 C23.5 4 25 6.5 24 9.5 L21 19.5 C20.4 21.8 19 23 17 23 Z" fill="url(#cg2)"/></svg>
<svg class="a" style="left:1080px;top:1038px" width="34" height="32" viewBox="0 0 34 32">
<circle cx="18.3" cy="11.3" r="4.4" fill="#7b83eb"/><rect x="11" y="14" width="15.5" height="14.5" rx="5" fill="#7b83eb"/><circle cx="23.6" cy="14.2" r="3" fill="#5059c9"/><rect x="19.5" y="16.2" width="8.6" height="10" rx="3.6" fill="#5059c9"/>
<rect x="3" y="11.8" width="11.6" height="12" rx="1.4" fill="#4b53bc"/>
<circle cx="24.3" cy="8.9" r="7.7" fill="#1577d3"/></svg>
<span class="t" style="left:1085.80px;top:1052px;font-size:9.5px;line-height:9.5px;color:#fff;font-weight:700;">T</span>
<span class="t" style="left:1101.70px;top:1042px;font-size:11.5px;line-height:11.5px;color:#fff;font-weight:700;">1</span>
<svg class="a" style="left:1125px;top:1044px" width="28" height="24" viewBox="0 0 28 24"><path d="M1 3.5 C1 2.5 1.8 2 2.6 2 H9.5 L12 4.5 H1 Z" fill="#e8a712"/><rect x="1" y="4.5" width="26" height="18" rx="2" fill="#fbcd3f"/><rect x="6.4" y="16" width="15" height="6.3" rx="1.5" fill="#1a86d6"/></svg>
<svg class="a" style="left:1170px;top:1041px" width="30" height="30" viewBox="0 0 30 30">
<defs><linearGradient id="mg" x1="0" y1="0" x2="1" y2="0.6"><stop offset="0" stop-color="#28b6ea"/><stop offset="0.5" stop-color="#2664d6"/><stop offset="1" stop-color="#1f49b8"/></linearGradient>
<linearGradient id="mg2" x1="0" y1="0" x2="0" y2="1"><stop offset="0" stop-color="#29a3e6"/><stop offset="0.5" stop-color="#6fcf6a"/><stop offset="1" stop-color="#f3d33a"/></linearGradient>
<linearGradient id="mg3" x1="0" y1="0" x2="1" y2="1"><stop offset="0" stop-color="#b768ea"/><stop offset="1" stop-color="#f0609a"/></linearGradient></defs>
<path d="M6 4 H15 C18 4 19.5 5.5 20.5 8 L23 15 H15 L12.5 8.5 C11.8 7 10.5 6.5 9 7 Z" fill="url(#mg)"/>
<path d="M6 4 C8.5 4 10 5 9.2 7.5 L6.5 16.5 C6 18.5 4.5 20 2.5 20 C1 19.5 0.8 18 1.3 16.5 L4 7 C4.4 5.5 5 4.5 6 4 Z" fill="url(#mg2)"/>
<path d="M18 10 H22 C23.5 10 24.6 11 24.2 12.6 L22.6 18 C22.2 19.4 21 20.2 19.6 20.2 H13.2 C15 20 16 19 16.5 17.5 Z" fill="url(#mg3)"/>
<rect x="6.1" y="20.1" width="18.8" height="6.6" rx="0.8" fill="#0b0b0b"/></svg>
<span class="t" style="left:1177.30px;top:1061px;font-size:7.5px;line-height:7.5px;color:#fff;font-weight:700;transform:scaleX(0.8846);-webkit-text-stroke:0.13px;">M365</span>
<div class="a" style="left:1208px;top:1036.8px;width:34px;height:38.6px;background:rgba(255,255,255,0.55);border-radius:4px;border:1px solid rgba(232,235,240,0.95);box-sizing:border-box;"></div>
<div class="a" style="left:1244px;top:1038px;width:1px;height:36px;background:rgba(240,243,247,0.8);"></div>
<svg class="a" style="left:1213.7px;top:1043px" width="26" height="26" viewBox="0 0 26 26">
<circle cx="13" cy="13" r="12" fill="#e33b2e"/>
<path d="M13 13 L2.6 7 A12 12 0 0 0 11 24.8 L17 14.5 Z" fill="#2da94f"/>
<path d="M13 13 L11 24.8 A12 12 0 0 0 23.4 7 L13 7 Z" fill="#fcc31e"/>
<path d="M2.6 7 A12 12 0 0 1 23.4 7 L13 7 Z" fill="#e33b2e"/>
<circle cx="13" cy="13" r="5.6" fill="#fff"/><circle cx="13" cy="13" r="4.4" fill="#2f7de1"/></svg>
<div class="a" style="left:1219.4px;top:1072.2px;width:15.6px;height:2.8px;background:#1976d2;border-radius:1.4px;"></div>
<span class="t" style="left:1857.50px;top:1042px;font-size:12.3px;line-height:12.3px;color:#444;transform:scaleX(0.9389);-webkit-text-stroke:0.18px;">4:12 PM</span>
<span class="t" style="left:1845.50px;top:1058px;font-size:12.3px;line-height:12.3px;color:#444;transform:scaleX(1.0051);-webkit-text-stroke:0.18px;">9/22/2025</span>
</body></html>
